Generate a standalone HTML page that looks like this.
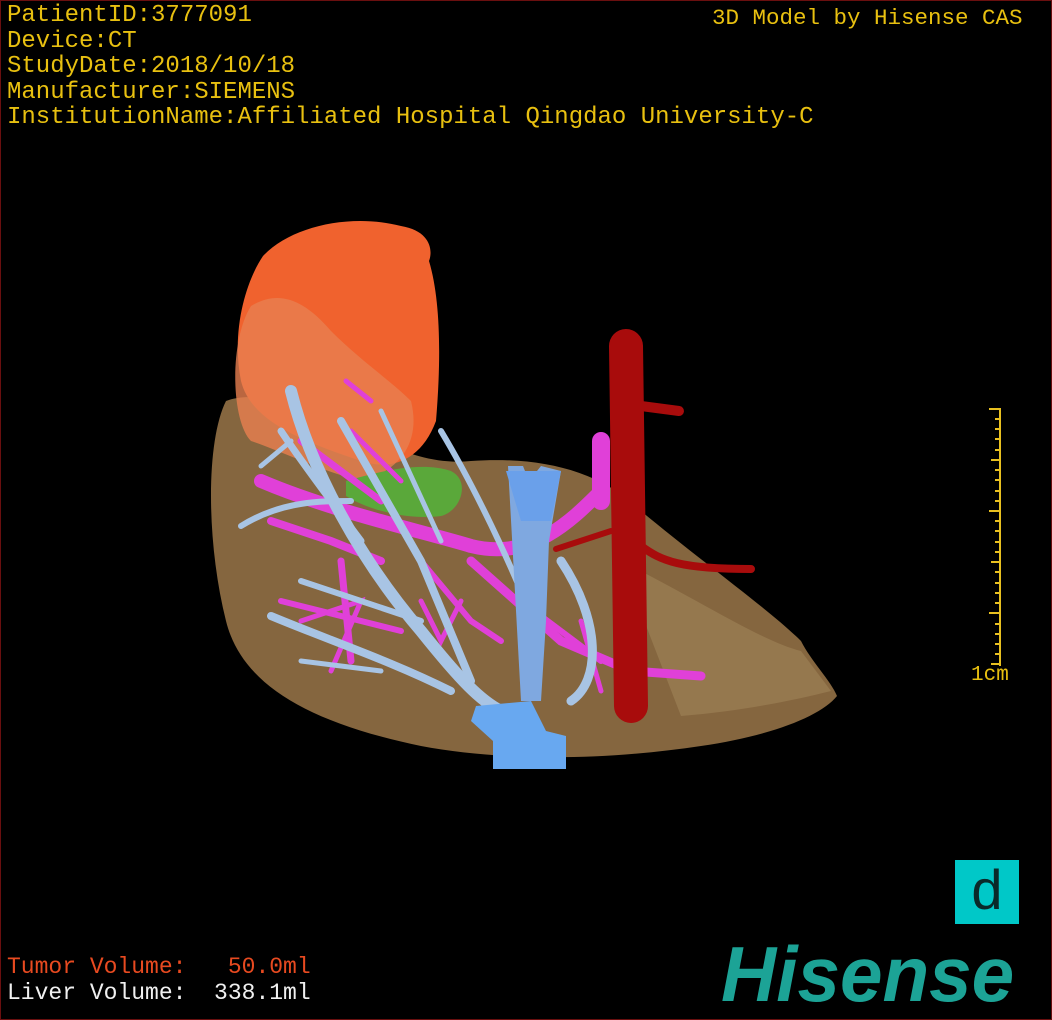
<!DOCTYPE html>
<html><head><meta charset="utf-8"><style>
html,body{margin:0;padding:0;background:#000;}
#c{position:relative;width:1050px;height:1018px;border:1px solid #6a0f0f;overflow:hidden;background:#000;}
.t{position:absolute;font-family:"Liberation Mono",monospace;color:#e8c010;white-space:pre;}
</style></head><body><div id="c">
<svg width="1050" height="1018" style="position:absolute;left:0;top:0">
<path d="M225,400 C205,440 205,540 225,620 C240,680 300,720 420,745 C500,760 600,760 700,745 C770,735 820,715 836,695 C830,680 810,660 800,640 C770,610 700,560 640,510 C600,470 540,455 470,460 C420,465 380,440 330,420 C290,400 250,390 225,400 Z" fill="#85663f"/>
<path d="M620,560 C700,600 760,640 800,650 L830,690 C790,700 740,710 680,715 Z" fill="#a08458" opacity="0.6"/>
<path d="M262,255 C290,225 350,212 400,225 C430,230 432,250 428,260 C440,300 440,360 435,420 C420,460 390,470 360,460 C300,440 250,420 240,380 C230,330 245,280 262,255 Z" fill="#f0622e"/>
<path d="M250,305 C275,290 300,295 330,330 C360,360 390,380 410,400 C420,440 400,470 360,480 C320,470 280,450 250,440 C230,420 228,340 250,305 Z" fill="#e98050" opacity="0.8"/>
<path d="M345,480 C380,470 420,460 450,470 C470,480 460,510 440,515 C400,520 360,505 345,495 Z" fill="#5aa83a"/>
<g stroke="#e040d8" fill="none" stroke-linecap="round">
<path d="M260,480 C330,510 420,530 470,545 C530,560 570,520 600,490" stroke-width="14"/>
<path d="M600,440 L600,500" stroke-width="18"/>
<path d="M270,520 L330,540 L380,560" stroke-width="8"/>
<path d="M300,440 L340,470 L380,500" stroke-width="7"/>
<path d="M350,430 L400,480" stroke-width="5"/>
<path d="M345,380 L370,400" stroke-width="5"/>
<path d="M340,560 L350,660" stroke-width="7"/>
<path d="M280,600 L400,630" stroke-width="6"/>
<path d="M420,560 L470,620 L500,640" stroke-width="6"/>
<path d="M470,560 L560,640 L630,670 L700,675" stroke-width="9"/>
<path d="M520,600 L600,660" stroke-width="6"/>
<path d="M580,620 L600,690" stroke-width="5"/>
<path d="M300,620 L360,600 L330,670" stroke-width="5"/>
<path d="M420,600 L440,640 L460,600" stroke-width="5"/>
</g>
<g stroke="#a8c4e4" fill="none" stroke-linecap="round">
<path d="M290,390 C310,470 360,560 420,630 C460,680 480,700 500,710" stroke-width="12"/>
<path d="M280,430 C300,460 330,500 360,540" stroke-width="7"/>
<path d="M240,525 C280,500 320,500 350,500" stroke-width="6"/>
<path d="M270,615 C330,640 390,660 450,690" stroke-width="8"/>
<path d="M300,580 L420,620" stroke-width="6"/>
<path d="M340,420 L420,560 L470,680" stroke-width="8"/>
<path d="M380,410 L440,540" stroke-width="5"/>
<path d="M440,430 C470,480 510,560 540,640" stroke-width="6"/>
<path d="M560,560 C600,620 600,680 570,700" stroke-width="9"/>
<path d="M300,660 L380,670" stroke-width="5"/>
<path d="M260,465 L290,440" stroke-width="5"/>
</g>
<path d="M507,465 L522,465 L528,480 L540,465 L560,470 L548,540 L545,620 L540,700 L520,700 Z" fill="#7fa8e0"/>
<path d="M505,470 L560,470 L550,520 L520,520 Z" fill="#6aa0ea"/>
<path d="M475,705 L530,700 L545,730 L565,735 L565,768 L492,768 L492,740 L470,720 Z" fill="#68a8f0"/>
<g stroke="#a80c0c" fill="none" stroke-linecap="round">
<path d="M625,345 L630,705" stroke-width="34"/>
<path d="M640,405 L678,410" stroke-width="10"/>
<path d="M640,545 C660,560 680,568 750,568" stroke-width="8"/>
<path d="M610,530 L555,548" stroke-width="6"/>
</g>
<g stroke="#e8c020" stroke-width="2">
<line x1="999" y1="407" x2="999" y2="665"/>
<line x1="988" y1="408" x2="999" y2="408"/><line x1="994" y1="418" x2="999" y2="418"/><line x1="994" y1="428" x2="999" y2="428"/><line x1="994" y1="438" x2="999" y2="438"/><line x1="994" y1="449" x2="999" y2="449"/>
<line x1="990" y1="459" x2="999" y2="459"/><line x1="994" y1="469" x2="999" y2="469"/><line x1="994" y1="479" x2="999" y2="479"/><line x1="994" y1="490" x2="999" y2="490"/><line x1="994" y1="500" x2="999" y2="500"/>
<line x1="988" y1="510" x2="999" y2="510"/><line x1="994" y1="520" x2="999" y2="520"/><line x1="994" y1="530" x2="999" y2="530"/><line x1="994" y1="541" x2="999" y2="541"/><line x1="994" y1="551" x2="999" y2="551"/>
<line x1="990" y1="561" x2="999" y2="561"/><line x1="994" y1="571" x2="999" y2="571"/><line x1="994" y1="582" x2="999" y2="582"/><line x1="994" y1="592" x2="999" y2="592"/><line x1="994" y1="602" x2="999" y2="602"/>
<line x1="988" y1="612" x2="999" y2="612"/><line x1="994" y1="623" x2="999" y2="623"/><line x1="994" y1="633" x2="999" y2="633"/><line x1="994" y1="643" x2="999" y2="643"/><line x1="994" y1="653" x2="999" y2="653"/>
<line x1="990" y1="663" x2="999" y2="663"/>
</g>
</svg>
<div class="t" style="left:6px;top:2px;font-size:24px;line-height:25.5px">PatientID:3777091
Device:CT
StudyDate:2018/10/18
Manufacturer:SIEMENS
InstitutionName:Affiliated Hospital Qingdao University-C</div>
<div class="t" style="left:711px;top:4px;font-size:22.5px">3D Model by Hisense CAS</div>
<div class="t" style="left:970px;top:663px;font-size:21px">1cm</div>
<div class="t" style="left:6px;top:953px;font-size:23px;color:#e84a20">Tumor Volume:   50.0ml</div>
<div class="t" style="left:6px;top:979px;font-size:23px;color:#f0f0f0">Liver Volume:  338.1ml</div>
<div style="position:absolute;left:954px;top:859px;width:64px;height:64px;background:#00c8c8;color:#0a2a2a;font-family:'Liberation Sans',sans-serif;font-size:56px;line-height:60px;text-align:center">d</div>
<div style="position:absolute;left:720px;top:928px;font-family:'Liberation Sans',sans-serif;font-weight:bold;font-style:italic;font-size:78px;color:#1ca396;transform:scaleX(0.98);transform-origin:left">Hisense</div>
</div></body></html>
